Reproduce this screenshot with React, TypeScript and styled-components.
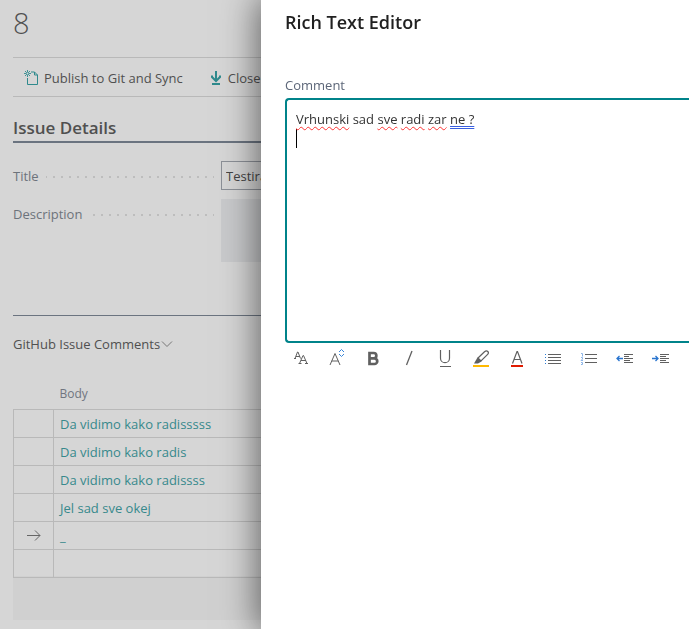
import React from "react";
import styled, { createGlobalStyle, css } from "styled-components";

const GlobalStyle = createGlobalStyle`
  *, *::before, *::after { box-sizing: border-box; }
  body {
    margin: 0;
    background: #d6d6d6;
    color: #505050;
    font: 13px/20px "Open Sans", "Noto Sans", sans-serif;
    overflow: hidden;
  }
  button, input { font: inherit; color: inherit; }
  h1, h2, h3 { margin: 0; }
  svg { display: block; flex: none; }
`;

const Page = styled.main`
  padding-left: 13px;
  min-height: 100vh;
  overflow: hidden;
`;

const RecordTitle = styled.h1`
  height: 57px;
  padding-top: 7px;
  font-size: 29px;
  line-height: 32px;
  font-weight: 300;
`;

const ActionBar = styled.div`
  display: flex;
  align-items: center;
  gap: 28px;
  height: 40px;
  padding-left: 11px;
  border: solid #b9b9b9;
  border-width: 1px 0;
`;

const Action = styled.button`
  display: flex;
  align-items: center;
  gap: 5px;
  padding: 1px 0 0;
  border: 0;
  background: none;
  white-space: nowrap;
`;

const SectionTitle = styled.h2`
  height: 46px;
  padding-top: 19px;
  border-bottom: 2px solid #6b7480;
  font-size: 17px;
  line-height: 24px;
  font-weight: 600;
`;

const Fields = styled.div`
  display: grid;
  gap: 9px;
  height: 173px;
  padding-top: 18px;
  align-content: start;
  border-bottom: 1px solid #6b7480;
`;

const FieldRow = styled.div`
  display: grid;
  grid-template-columns: 201px 1fr;
  gap: 7px;
`;

const FieldLabel = styled.label`
  height: 29px;
  background: linear-gradient(90deg, #bdbdbd 2px, transparent 2px) 0 15px / 8px 2px repeat-x;
  color: #6d737b;
  line-height: 31px;

  span {
    display: inline-block;
    padding-right: 7px;
    background: #d6d6d6;
  }
`;

const inputBase = css`
  width: 100%;
  padding: 0 4px;
  border-radius: 0;
`;

const TextInput = styled.input`
  ${inputBase}
  height: 29px;
  border: 1px solid #8c9097;
  background: transparent;
  color: #444;
`;

const TextBlock = styled.textarea`
  ${inputBase}
  display: block;
  height: 63px;
  border: 0;
  background: #c9cacc;
  resize: none;
`;

const PartTitle = styled.button`
  display: flex;
  align-items: center;
  height: 56px;
  padding: 0;
  border: 0;
  background: none;
`;

const ListArea = styled.section`
  padding-bottom: 42px;
  background: linear-gradient(#d6d6d6 204px, #d0d0d0 204px);
`;

const Lines = styled.table`
  width: 100%;
  border-collapse: collapse;
  table-layout: fixed;

  th {
    height: 37px;
    padding: 8px 6px 0;
    color: #70757f;
    font-size: 12px;
    font-weight: 400;
    text-align: left;
  }
  td {
    height: 28px;
    padding: 1px 6px 0;
    border: 1px solid #b9b9b9;
  }
  th:first-child {
    width: 40px;
  }
  td:first-child svg {
    margin: 0 auto;
  }
`;

const LineLink = styled.a`
  color: #37898c;
  text-decoration: none;
`;

const Panel = styled.aside`
  position: fixed;
  inset: 0 0 0 261px;
  padding: 10px 0 0 24px;
  background: #fff;
  box-shadow: 0 0 34px 3px rgba(0, 0, 0, 0.55);
  overflow: hidden;
`;

const PanelTitle = styled.h2`
  height: 65px;
  color: #212121;
  font-size: 18px;
  line-height: 24px;
  font-weight: 600;
`;

const EditorLabel = styled.div`
  height: 23px;
  color: #5c6678;
`;

const Editor = styled.div`
  height: 245px;
  padding: 10px 9px;
  border: 2px solid #00838a;
  border-right: 0;
  border-radius: 4px 0 0 4px;
  outline: none;
  color: #333;
  line-height: 19px;
  font-size: 13px;

  p {
    margin: 0;
  }
`;

const Misspelled = styled.span`
  text-decoration: underline wavy #f33 1px;
  text-underline-offset: 2px;
  text-decoration-skip-ink: none;
`;

const Grammar = styled.span`
  text-decoration: underline double #3a5fe0 1px;
  text-underline-offset: 2px;
  text-decoration-skip-ink: none;
`;

const Caret = styled.span`
  display: block;
  width: 1px;
  height: 19px;
  background: #000;
`;

const Toolbar = styled.div`
  display: flex;
  gap: 4px;
`;

const Tool = styled.button`
  display: grid;
  place-items: center;
  flex: none;
  width: 32px;
  height: 30px;
  padding: 0;
  border: 0;
  background: none;
`;

const NewDocIcon = () => (
  <svg width="15" height="16" viewBox="0 0 15 16" fill="none" stroke="#2f8a8d">
    <path d="M3.500 8v6.500h10V5l-3-3H7M10.500 2v3h3" />
    <path d="M3.500 0v7M0 3.500h7M1 1l5 5M6 1L1 6" strokeWidth="0.900" />
    <circle cx="3.500" cy="3.500" r="1" fill="#d6d6d6" stroke="none" />
  </svg>
);

const DownIcon = () => (
  <svg width="12" height="16" viewBox="0 0 12 16" fill="none" stroke="#2f8a8d" strokeWidth="2">
    <path d="M5 1v10M1 5.500v1.500l4 4 4-4V5.500M1 14h8" />
  </svg>
);

const ChevronIcon = () => (
  <svg width="14" height="10" viewBox="0 0 14 10" fill="none" stroke="#777">
    <path d="M2 2.500l5 5 5-5" />
  </svg>
);

const ArrowIcon = () => (
  <svg width="14" height="12" viewBox="0 0 14 12" fill="none" stroke="#666">
    <path d="M0 5.500h13M8 .500l5 5-5 5" />
  </svg>
);

const toolShapes: { name: string; shape: React.ReactNode }[] = [
  {
    name: "Font",
    shape: <path d="M3 9.500L5.500 3H6l2.500 6.500M4 7.500h4M2 9.500h2M7.500 14.500L11 6.500h.500l3.500 8M9 11.500h5M6.500 14.500h3M13 14.500h3" />,
  },
  {
    name: "Font size",
    shape: (
      <>
        <path d="M2 16L7 4.500l5 11.500M3.700 12h6.600" />
        <path d="M11 3l2.500-2.500L16 3M11 5l2.500 2.500L16 5" stroke="#3a86d8" />
      </>
    ),
  },
  {
    name: "Bold",
    shape: <path d="M5.500 4h4.200a2.600 2.600 0 010 5.300H5.500zM5.500 9.300h4.900a2.800 2.800 0 010 5.700H5.500z" strokeWidth="2.700" />,
  },
  { name: "Italic", shape: <path d="M12 2L6.500 16" strokeWidth="1.300" /> },
  {
    name: "Underline",
    shape: <path d="M4.500 1v8.200a4.500 4.500 0 009 0V1M4 17.500h11" strokeWidth="1.200" />,
  },
  {
    name: "Highlight colour",
    shape: (
      <>
        <path d="M6 9L12.500 2.800c1.200-1.100 2.500-1.100 3.300-.3s.700 2.100-.4 3.200L9 12z" strokeWidth="1.200" />
        <path d="M2 14.500L5.500 8.500l4 4-3.500 2z" fill="#606060" stroke="none" />
        <rect x="1" y="16" width="16" height="2" fill="#ffb900" stroke="none" />
      </>
    ),
  },
  {
    name: "Font colour",
    shape: (
      <>
        <path d="M4.500 14.500L9 2.500h.500L14 14.500M6 10.500h6.500" strokeWidth="1.200" />
        <rect x="3" y="16" width="12" height="2" fill="#e01b00" stroke="none" />
      </>
    ),
  },
  {
    name: "Bulleted list",
    shape: (
      <>
        <path d="M4 5.500h13M4 8.500h13M4 11.500h13M4 14.500h13" />
        <path d="M1 5.500h1M1 8.500h1M1 11.500h1M1 14.500h1" stroke="#2a7ad4" />
      </>
    ),
  },
  {
    name: "Numbered list",
    shape: (
      <>
        <path d="M5 5.500h12M5 9.500h12M5 13.500h12" />
        <path d="M1 4.500h1.500v3M1 8.500h1.500v1.500L1 11.500h2M1 13.500h1.500v2H1" stroke="#8db5e6" />
      </>
    ),
  },
  {
    name: "Decrease indent",
    shape: (
      <>
        <path d="M8 5.500h9M8 7.500h5M8 9.500h9M8 11.500h6M8 13.500h9" />
        <path d="M1 9.500h6M3.500 7L1 9.500 3.500 12" stroke="#2a75cf" strokeWidth="1.300" />
      </>
    ),
  },
  {
    name: "Increase indent",
    shape: (
      <>
        <path d="M8 5.500h9M8 7.500h6M8 9.500h9M8 11.500h6M8 13.500h9" />
        <path d="M0 9.500h6M3.500 7L6 9.500 3.500 12" stroke="#2a75cf" strokeWidth="1.300" />
      </>
    ),
  },
];

const comments = [
  "Da vidimo kako radisssss",
  "Da vidimo kako radis",
  "Da vidimo kako radissss",
  "Jel sad sve okej",
  "_",
  "",
];

export default function App() {
  return (
    <>
      <GlobalStyle />
      <Page>
        <RecordTitle>8</RecordTitle>
        <ActionBar>
          <Action type="button">
            <NewDocIcon />
            Publish to Git and Sync
          </Action>
          <Action type="button">
            <DownIcon />
            Close
          </Action>
        </ActionBar>
        <SectionTitle>Issue Details</SectionTitle>
        <Fields>
          <FieldRow>
            <FieldLabel htmlFor="title">
              <span>Title</span>
            </FieldLabel>
            <TextInput id="title" defaultValue="Testira" />
          </FieldRow>
          <FieldRow>
            <FieldLabel htmlFor="description">
              <span>Description</span>
            </FieldLabel>
            <TextBlock id="description" readOnly />
          </FieldRow>
        </Fields>
        <PartTitle type="button">
          GitHub Issue Comments
          <ChevronIcon />
        </PartTitle>
        <ListArea>
          <Lines>
            <thead>
              <tr>
                <th aria-label="Current row" />
                <th>Body</th>
              </tr>
            </thead>
            <tbody>
              {comments.map((text, i) => (
                <tr key={i}>
                  <td>{text === "_" && <ArrowIcon />}</td>
                  <td>{text && <LineLink href="#comment">{text}</LineLink>}</td>
                </tr>
              ))}
            </tbody>
          </Lines>
        </ListArea>
      </Page>
      <Panel role="dialog" aria-labelledby="panel-title">
        <PanelTitle id="panel-title">Rich Text Editor</PanelTitle>
        <EditorLabel id="comment-label">Comment</EditorLabel>
        <Editor
          role="textbox"
          aria-multiline="true"
          aria-labelledby="comment-label"
          contentEditable
          suppressContentEditableWarning
          spellCheck={false}
        >
          <p>
            <Misspelled>Vrhunski</Misspelled> sad <Misspelled>sve</Misspelled>{" "}
            <Misspelled>radi</Misspelled> <Misspelled>zar</Misspelled>{" "}
            <Grammar>ne ?</Grammar>
          </p>
          <Caret />
        </Editor>
        <Toolbar role="toolbar" aria-label="Formatting">
          {toolShapes.map(({ name, shape }) => (
            <Tool key={name} type="button" aria-label={name}>
              <svg width="18" height="18" viewBox="0 0 18 18" fill="none" stroke="#606060">
                {shape}
              </svg>
            </Tool>
          ))}
        </Toolbar>
      </Panel>
    </>
  );
}
